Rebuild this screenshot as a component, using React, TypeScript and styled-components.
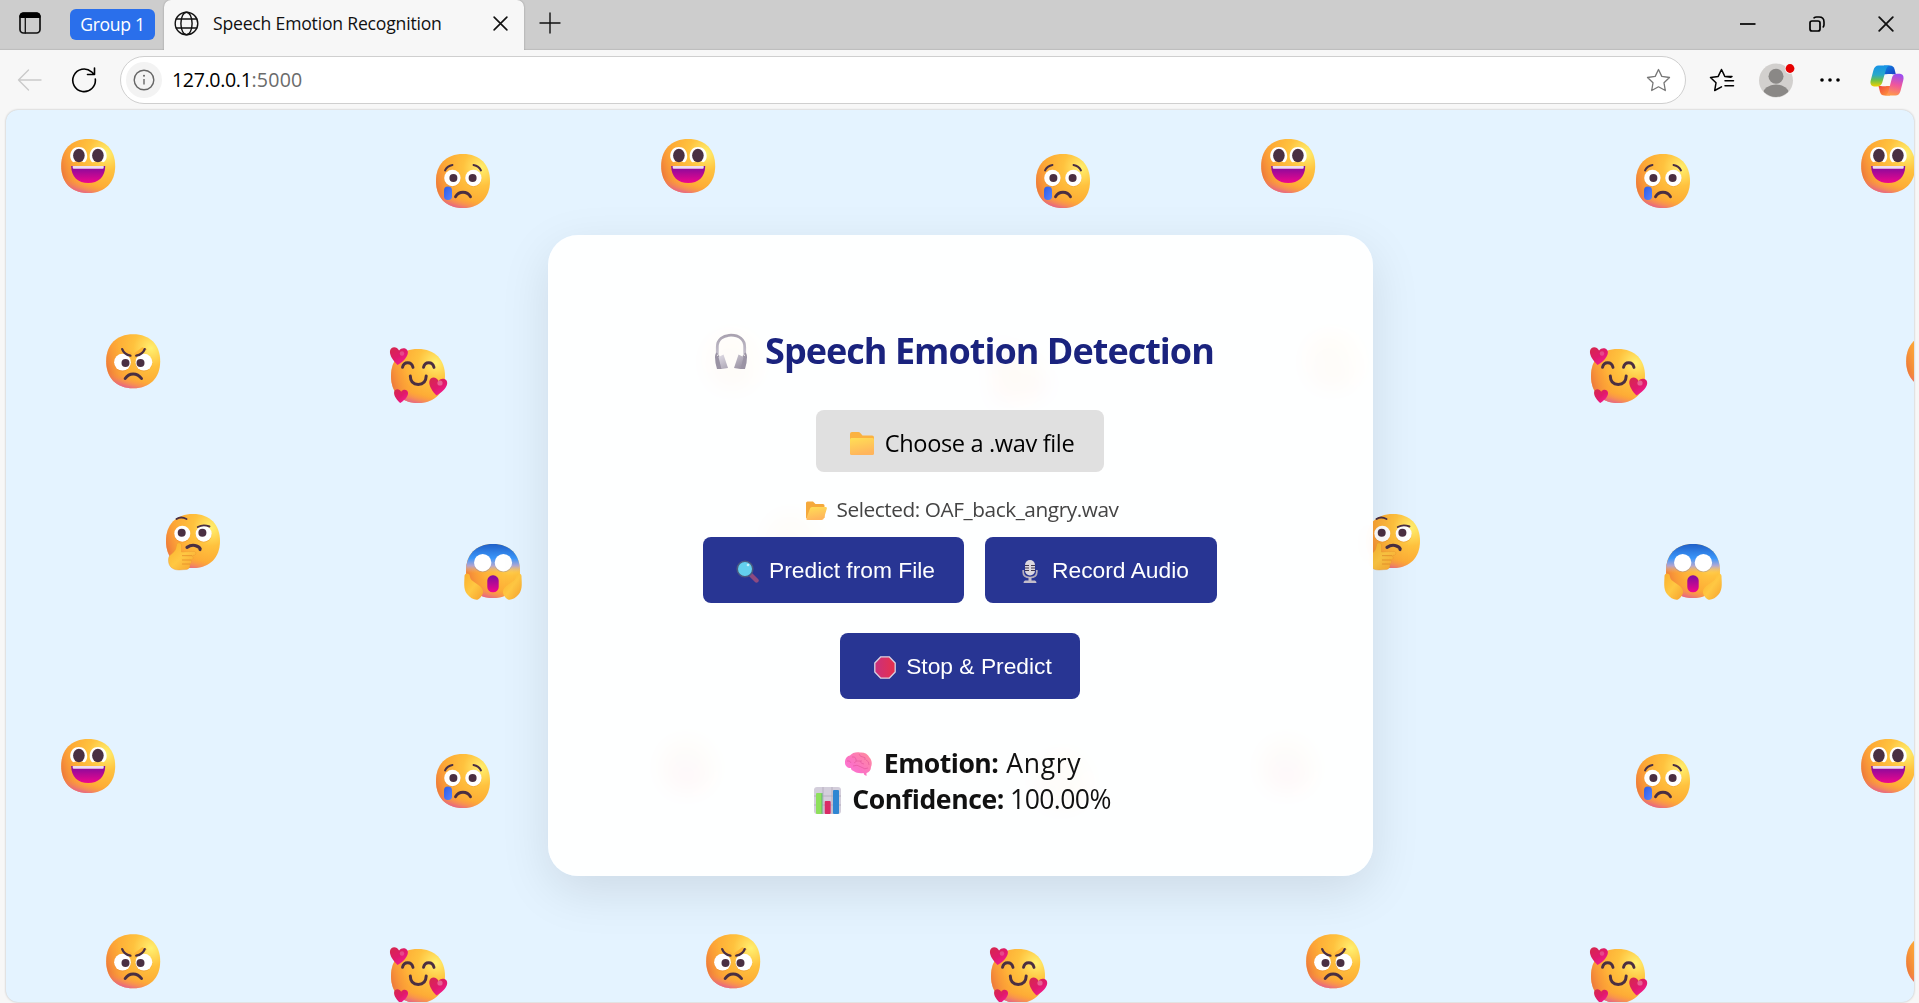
import React from "react";
import styled, { createGlobalStyle, css } from "styled-components";

const Global = createGlobalStyle`
  * { box-sizing: border-box; }
  html, body { margin: 0; height: 100%; overflow: hidden; }
  body { font-family: "Open Sans", "Noto Sans", sans-serif; background: #f7f7f7; color: #111; }
  button { font-family: inherit; }
  svg { flex: none; }
`;

/* ---------- browser chrome ---------- */

const Browser = styled.div`
  display: grid;
  grid-template-rows: 50px 60px minmax(0, 1fr);
  height: 1003px;
  width: 100%;
  background: #f7f7f7;
`;

const TabStrip = styled.div`
  display: flex;
  align-items: stretch;
  background: #cdcdcd;
  box-shadow: inset 0 -2px 1px -1px #bdbdbd;
`;

const StripCell = styled.div<{ $w: number; $pad?: number }>`
  display: flex;
  align-items: center;
  flex: 0 0 ${(p) => p.$w}px;
  padding-left: ${(p) => p.$pad ?? 0}px;
  padding-bottom: 4px;
`;

const GroupPill = styled.div`
  display: flex;
  align-items: center;
  justify-content: center;
  width: 85px;
  height: 31px;
  margin-top: 3px;
  border-radius: 6px;
  background: #2a6feb;
  color: #fff;
`;

const Tab = styled.div`
  display: flex;
  align-items: center;
  flex: 0 0 360px;
  padding: 0 16px 4px 10px;
  background: #f7f7f7;
  border-radius: 7px 7px 0 0;
  box-shadow: 0 0 2px rgba(0, 0, 0, 0.3);
  clip-path: inset(0 -3px 0 -3px);
`;

const TabTitle = styled.div`
  flex: 1;
  padding-left: 14px;
`;

const WindowButtons = styled.div`
  display: flex;
  align-items: center;
  margin-left: auto;
  padding: 0 25px 2px 0;
  gap: 53px;
`;

const Toolbar = styled.div`
  display: flex;
  align-items: center;
  padding: 0 15px 0 17px;
`;

const NavIcons = styled.div`
  display: flex;
  align-items: center;
  gap: 29px;
  width: 103px;
`;

const AddressBar = styled.div`
  display: flex;
  align-items: center;
  flex: 0 0 1566px;
  height: 48px;
  padding: 0 14px 0 5px;
  border: 1px solid #cfcfcf;
  border-radius: 24px;
  background: #fff;
`;

const InfoBadge = styled.div`
  display: flex;
  align-items: center;
  justify-content: center;
  width: 36px;
  height: 36px;
  border-radius: 50%;
  background: #f3f3f3;
`;

const Url = styled.div`
  flex: 1;
  padding-left: 10px;
`;

const ToolIcons = styled.div`
  display: grid;
  grid-template-columns: 50px 61px 50px 34px;
  align-items: center;
  padding-left: 23px;
`;

/* ---------- page ---------- */

const PageFrame = styled.div`
  display: grid;
  min-height: 0;
  filter: drop-shadow(0 0 1px rgba(0, 0, 0, 0.25));
`;

const Page = styled.main`
  position: relative;
  display: flex;
  justify-content: center;
  align-items: flex-start;
  margin: 0 5px 1px 6px;
  padding-top: 125px;
  border-radius: 12px;
  overflow: hidden;
  background: #e4f3ff;
`;

const Wallpaper = styled.svg`
  position: absolute;
  top: 0;
  left: -1px;
  width: calc(100% + 1px);
  height: 100%;
`;

const Card = styled.section`
  position: relative;
  display: flex;
  flex-direction: column;
  align-items: center;
  width: 825px;
  height: 641px;
  margin-left: 1px;
  border-radius: 30px;
  padding: 86px 1px 0 0;
  background: rgba(255, 255, 255, 0.96);
  backdrop-filter: blur(10px);
  box-shadow: 0 15px 50px rgba(0, 0, 0, 0.1);
`;

const Title = styled.h1`
  display: flex;
  align-items: center;
  height: 60px;
  margin: 0;
  color: #1a237e;
`;

const FileButton = styled.button`
  display: flex;
  align-items: center;
  justify-content: center;
  width: 288px;
  height: 62px;
  margin-top: 29px;
  padding: 4px 0 0;
  border: 0;
  border-radius: 8px;
  background: #e0e0e0;
  color: #000;
`;

const Selected = styled.div`
  display: flex;
  align-items: center;
  height: 30px;
  margin-top: 23px;
  color: #444;
`;

const ButtonRow = styled.div<{ $top: number }>`
  display: flex;
  gap: 21px;
  margin-top: ${(p) => p.$top}px;
`;

const ActionButton = styled.button<{ $w: number }>`
  display: flex;
  align-items: center;
  justify-content: center;
  width: ${(p) => p.$w}px;
  height: 66px;
  padding: 2px 0 0;
  border: 0;
  border-radius: 8px;
  background: #283593;
  color: #fff;
`;

const Results = styled.div`
  display: flex;
  flex-direction: column;
  align-items: center;
  margin-top: 47px;
  color: #111;
`;

const ResultLine = styled.div`
  display: flex;
  align-items: center;
  height: 36px;
`;

const Glyph = styled.span<{ $lead: number }>`
  display: flex;
  padding-left: ${(p) => p.$lead}px;
`;

interface LabelProps {
  $size: number;
  $ls?: number;
  $weight?: number;
  $arial?: boolean;
  $gap?: number;
  $lift?: number;
  $color?: string;
}

const Label = styled.span<LabelProps>`
  display: inline-block;
  white-space: pre;
  font-size: ${(p) => p.$size}px;
  letter-spacing: ${(p) => p.$ls ?? 0}px;
  font-weight: ${(p) => p.$weight ?? 400};
  line-height: 1.3;
  margin-left: ${(p) => p.$gap ?? 0}px;
  padding-bottom: ${(p) => (p.$lift ?? 0) * 2}px;
  ${(p) => p.$color && css`color: ${p.$color};`}
  ${(p) => p.$arial && css`font-family: "Liberation Sans", Arial, sans-serif;`}
`;

/* ---------- emoji wallpaper ---------- */

const FACE = "M0-27C17-27 27-16.500 27 0S17 27 0 27-27 16.500-27 0-17-27 0-27Z";
const HEART = "M0 9C-4 6-9 1-9-4C-9-9-2.500-10 0-5.500C2.500-10 9-9 9-4C9 1 4 6 0 9Z";
const INK = "#4a2f42";

const Face = () => (
  <>
    <path d={FACE} fill="url(#skin)" />
    <path d={FACE} fill="url(#skinLeft)" />
    <path d={FACE} fill="url(#skinBottom)" />
  </>
);

const Eye = ({ x, y, px, py, r = 8.2 }: { x: number; y: number; px: number; py: number; r?: number }) => (
  <>
    <circle cx={x} cy={y + 0.8} r={r} fill="#e07a20" opacity=".35" />
    <circle cx={x} cy={y} r={r} fill="#fff" />
    <circle cx={px} cy={py} r="4" fill={INK} />
  </>
);

const Stroke = ({ d, w = 2.4 }: { d: string; w?: number }) => (
  <path d={d} fill="none" stroke={INK} strokeWidth={w} strokeLinecap="round" />
);

const Grin = () => (
  <g>
    <Face />
    <path d="M-18-9.500C-18-16-14-19-9.400-19S-1-16-1-9.500C-1-6-3-3.700-4.500-3.700C-7-5.500-12-5.500-14.500-3.700C-16.500-4.500-18-7-18-9.500Z" fill="#fff" />
    <path d="M18.500-9.500C18.500-16 14.500-19 9.800-19S1.500-16 1.500-9.500C1.500-6 3.500-3.700 5-3.700C7.500-5.500 12.500-5.500 15-3.700C17-4.500 18.500-7 18.500-9.500Z" fill="#fff" />
    <ellipse cx="-9.300" cy="-10.500" rx="5.800" ry="6.800" fill={INK} />
    <ellipse cx="9.700" cy="-10.500" rx="5.800" ry="6.800" fill={INK} />
    <path d="M-17 0H17C17 11 10 17 0 17S-17 11-17 0Z" fill="url(#mouth)" />
    <path d="M-15.500 0H15.500V1.800Q15.500 2.800 14.500 2.800H-14.500Q-15.500 2.800-15.500 1.800Z" fill="#eedcf2" />
  </g>
);

const Cry = () => (
  <g>
    <Face />
    <Eye x={-10.6} y={-3} px={-9.6} py={-3} />
    <Eye x={10.4} y={-3} px={9.6} py={-3} />
    <Stroke w={1.9} d="M-18-10.500Q-16-15-10.500-16M18-10.500Q16-15 10.500-16" />
    <Stroke w={2.9} d="M-7.500 15.700Q-5 11.200 0 11.200T7.500 15.700" />
    <rect x="-19" y="5.600" width="8" height="13.400" rx="3.800" fill="url(#tear)" />
  </g>
);

const Angry = () => (
  <g>
    <Face />
    <Eye x={-10.7} y={1} px={-7.7} py={1.7} r={8.4} />
    <Eye x={10.7} y={1} px={7.3} py={1.7} r={8.4} />
    <path d="M-14-12L-1-3V-8L-9-14ZM14-12L1-3V-8L9-14Z" fill="#ffb636" />
    <Stroke w={2.3} d="M-11-12Q-9-6.500-2.800-5.500M11.500-12Q9.500-6.500 3-5.500" />
    <Stroke w={3} d="M-8 17.300Q-5 12.700 0 12.700T8.300 17.300" />
  </g>
);

const Adoring = () => (
  <g>
    <Face />
    <Stroke w={2.9} d="M-15.500-8.600Q-14.500-13.200-10.300-13.200T-5-8.600M5.500-8.600Q6.500-13.200 10.700-13.200T16-8.600" />
    <Stroke w={3} d="M-7.700 0Q-7.500 8.500 .200 8.500T8.200 0" />
    <path transform="translate(-19.500 -20) rotate(6)" d={HEART} fill="url(#heart)" />
    <path transform="translate(-17.200 20) rotate(5) scale(.78)" d={HEART} fill="url(#heart)" />
    <path transform="translate(19.700 10.500) rotate(8)" d={HEART} fill="url(#heart)" />
    <circle cx="22" cy="7" r="2.600" fill="#fff" opacity=".3" />
    <circle cx="-16" cy="-22.500" r="2.200" fill="#fff" opacity=".2" />
  </g>
);

const Thinking = () => (
  <g>
    <Face />
    <Eye x={-10.7} y={-7.3} px={-11.3} py={-8.3} r={8} />
    <Eye x={10.7} y={-7.3} px={9.4} py={-8.3} r={8} />
    <Stroke w={1.9} d="M-16.500-22Q-12-25-6.500-22M4.800-14Q10-17 16.500-14.500" />
    <Stroke w={3.2} d="M-6 6.300Q-1 3 3.500 5T7 8.500" />
    <path d="M-16.500 4C-16.500 1-11.500 1-11.500 5V11L1 10.500C3.500 10.500 3.500 14.300 1 14.300L-1 15C1 16 0 18.500-2 19C-1 20.500-2 22.500-3 23C-2.500 26-4 28.500-7 28.500L-14 29C-21 29-25 25-24.500 18C-24 12-17 13-16.500 4Z" fill="url(#hand)" stroke="#e8922a" strokeOpacity=".45" strokeWidth=".8" />
    <path d="M-11 14.700H-1M-11 19H-2M-11 23H-3" stroke="#e8922a" strokeWidth=".9" fill="none" />
  </g>
);

const Scream = () => (
  <g>
    <Face />
    <path d={FACE} fill="url(#fear)" />
    <circle cx="-10.300" cy="-7.500" r="8.800" fill="#5a70c0" opacity=".3" />
    <circle cx="10.400" cy="-7.500" r="8.800" fill="#5a70c0" opacity=".3" />
    <circle cx="-10.300" cy="-8.300" r="8.700" fill="#fff" />
    <circle cx="10.400" cy="-8.300" r="8.700" fill="#fff" />
    <rect x="-5.700" y="4.300" width="11.400" height="17" rx="5.400" fill="url(#mouth)" />
    <path d="M-28.500 5C-28.500 1.500-23 1.500-23 6C-22 11-15 12-11.500 17C-8 21-11 26-15 28.500C-18 29.500-23 27-26 23C-30 18-28.500 10-28.500 5Z" fill="url(#hand)" />
    <path d="M28.500 5C28.500 1.500 23 1.500 23 6C22 11 15 12 11.500 17C8 21 11 26 15 28.500C18 29.500 23 27 26 23C30 18 28.500 10 28.500 5Z" fill="url(#hand)" />
  </g>
);

const EmojiWallpaper = () => (
  <Wallpaper>
    <defs>
      <radialGradient id="skin" gradientUnits="userSpaceOnUse" cx="18" cy="-13" r="36">
        <stop offset="0" stopColor="#fff070" />
        <stop offset=".5" stopColor="#ffc23e" />
        <stop offset="1" stopColor="#fdaa35" />
      </radialGradient>
      <linearGradient id="skinLeft" gradientUnits="userSpaceOnUse" x1="-28" y1="7" x2="-9" y2="1">
        <stop offset="0" stopColor="#e5633d" stopOpacity=".8" />
        <stop offset="1" stopColor="#ff9a3a" stopOpacity="0" />
      </linearGradient>
      <linearGradient id="skinBottom" gradientUnits="userSpaceOnUse" x1="-3" y1="28" x2="0" y2="17">
        <stop offset="0" stopColor="#e0569c" stopOpacity=".9" />
        <stop offset="1" stopColor="#ff8f4a" stopOpacity="0" />
      </linearGradient>
      <linearGradient id="mouth" x1="0" y1="0" x2="0" y2="1">
        <stop offset=".1" stopColor="#8a0a9c" />
        <stop offset="1" stopColor="#f0068c" />
      </linearGradient>
      <linearGradient id="tear" x1="0" y1="0" x2="1" y2="1">
        <stop offset="0" stopColor="#2f5be6" />
        <stop offset="1" stopColor="#5584ff" />
      </linearGradient>
      <linearGradient id="heart" x1="0" y1="0" x2="1" y2="1">
        <stop offset="0" stopColor="#d32a4a" />
        <stop offset=".5" stopColor="#e0196a" />
        <stop offset="1" stopColor="#fb1aa0" />
      </linearGradient>
      <linearGradient id="hand" x1="0" y1="0" x2="1" y2="1">
        <stop offset="0" stopColor="#fbb02c" />
        <stop offset=".5" stopColor="#ffc843" />
        <stop offset="1" stopColor="#f6a12e" />
      </linearGradient>
      <linearGradient id="fear" gradientUnits="userSpaceOnUse" x1="0" y1="-27" x2="0" y2="2">
        <stop offset="0" stopColor="#2060c8" />
        <stop offset=".5" stopColor="#3a97fb" />
        <stop offset=".75" stopColor="#a9a4e0" stopOpacity=".9" />
        <stop offset="1" stopColor="#f5b070" stopOpacity="0" />
      </linearGradient>
      <pattern id="emoji" width="600" height="600" patternUnits="userSpaceOnUse">
        <g transform="translate(83.200 56)"><Grin /></g>
        <g transform="translate(458 71)"><Cry /></g>
        <g transform="translate(128.200 251.200)"><Angry /></g>
        <g transform="translate(413 266)"><Adoring /></g>
        <g transform="translate(188 431)"><Thinking /></g>
        <g transform="translate(488 461)"><Scream /></g>
      </pattern>
    </defs>
    <rect width="100%" height="100%" fill="url(#emoji)" />
  </Wallpaper>
);

/* ---------- card icons ---------- */

const Headphones = () => (
  <svg width="34" height="37" viewBox="0 0 34 37">
    <defs>
      <linearGradient id="hp" x1="0" y1="0" x2="0" y2="1">
        <stop offset="0" stopColor="#a9a2b0" />
        <stop offset="1" stopColor="#c6c1ce" />
      </linearGradient>
      <linearGradient id="cup" x1="0" y1="0" x2="1" y2="1">
        <stop offset="0" stopColor="#e0dce6" />
        <stop offset="1" stopColor="#948d9e" />
      </linearGradient>
    </defs>
    <path d="M3.300 22V14C3.300 6.500 9 2.200 17 2.200S30.700 6.500 30.700 14V22" fill="none" stroke="url(#hp)" strokeWidth="2.800" />
    <path d="M3 20Q1.500 23 2 25M31 20Q32.500 23 32 25" fill="none" stroke="#9c95a5" strokeWidth="1.800" />
    <path d="M1 24L5 22L8 36H3Q1 30 1 24ZM33 24L29 22L26 36H31Q33 30 33 24Z" fill="#9a93a4" />
    <path d="M4.500 24L9.500 21.500L14 35L7.500 36ZM29.500 24L24.500 21.500L20 35L26.500 36Z" fill="url(#cup)" />
  </svg>
);

const Folder = () => (
  <svg width="24" height="23" viewBox="0 0 25 23" preserveAspectRatio="none">
    <defs>
      <linearGradient id="fold" x1="0" y1="0" x2=".3" y2="1">
        <stop offset="0" stopColor="#ffdf55" />
        <stop offset="1" stopColor="#ffb55c" />
      </linearGradient>
    </defs>
    <path d="M0 2Q0 0 2 0H8.500Q10 0 11 1.200L13 3.500H23Q25 3.500 25 5.500V10H0Z" fill="#fbb240" />
    <path d="M0 7.500Q0 6 1.500 6H23.500Q25 6 25 7.500V21.500Q25 23 23.500 23H1.500Q0 23 0 21.500Z" fill="url(#fold)" />
  </svg>
);

const OpenFolder = () => (
  <svg width="21" height="19" viewBox="0 0 21 19">
    <path d="M0 2Q0 .5 1.500 .5H7L9.500 3H17Q18.500 3 18.500 4.500V17H0Z" fill="#f5a93c" />
    <path d="M4 7.500Q4.500 6 6 6H19.500Q21.300 6 20.800 7.800L18 17Q17.500 19 15.500 19H1.500Q0 19 .4 17.500Z" fill="url(#fold)" />
  </svg>
);

const Magnifier = () => (
  <svg width="23" height="23" viewBox="0 0 23 23">
    <path d="M14 14L20.500 20.500" stroke="#8d4a80" strokeWidth="4.400" strokeLinecap="round" />
    <circle cx="9" cy="9" r="7.800" fill="#63d0ee" stroke="#4a5a80" strokeWidth="1.600" />
    <circle cx="12" cy="5" r="1.300" fill="#c5f1fd" />
  </svg>
);

const Microphone = () => (
  <svg width="16" height="23" viewBox="0 0 16 23">
    <path d="M1.200 10V12Q1.200 17.500 8 17.500T14.800 12V10" fill="none" stroke="#b3acba" strokeWidth="1.700" />
    <path d="M6.500 17H9.500V20.500H13Q14.500 21 14.500 23H1.500Q1.500 21 3 20.500H6.500Z" fill="#c3bdc9" />
    <rect x="3" width="10" height="15.500" rx="5" fill="#dcd8e0" />
    <path d="M3 5.500H7M9 5.500H13M3 8H7M9 8H13M3 10.500H7M9 10.500H13" stroke="#43384c" strokeWidth="1.100" />
  </svg>
);

const StopSign = () => (
  <svg width="22" height="23" viewBox="0 0 22 23">
    <defs>
      <linearGradient id="stop" x1="0" y1="0" x2="1" y2="0">
        <stop offset="0" stopColor="#c8307e" />
        <stop offset="1" stopColor="#e8304a" />
      </linearGradient>
    </defs>
    <path d="M6.800 .8H15.200L21.200 7V16L15.200 22.200H6.800L.8 16V7Z" fill="url(#stop)" stroke="#d8d2e2" strokeWidth="1.300" strokeLinejoin="round" />
  </svg>
);

const Brain = () => (
  <svg width="27" height="24" viewBox="0 0 27 24">
    <defs>
      <linearGradient id="brain" x1="1" y1="0" x2="0" y2="1">
        <stop offset="0" stopColor="#ff8f9a" />
        <stop offset=".6" stopColor="#fb72c4" />
        <stop offset="1" stopColor="#ff7ae0" />
      </linearGradient>
    </defs>
    <path d="M0 11C-.5 7 2 4 5 3.500C7 .5 12-.5 15 .5C19 0 23 2 24.500 5.500C27 8 27.300 12 26 15C26 18 24 20.500 21.500 21V24Q18.500 23 18.500 21C15 21.500 11 21 8.500 19C6 18 6 17 6 16C3 16.500 0 14 0 11Z" fill="url(#brain)" />
    <path d="M2 9Q5 8 6 11M7 5Q10 4 11 7T9 11M14 2Q15 5 18 5T20 8M11 9H17M21 8Q24 9 24 13M8 14Q12 12 16 15T23 16M15 9Q16 12 19 12" fill="none" stroke="#e05098" strokeWidth="1" opacity=".55" />
  </svg>
);

const BarChart = () => (
  <svg width="27" height="27" viewBox="0 0 27 27">
    <rect width="27" height="27" rx="3" fill="#d3cedb" />
    <path d="M0 9H27M0 18H27M9 0V27M18 0V27" stroke="#b3adbd" strokeWidth=".9" />
    <rect x="2" y="6" width="6" height="21" rx="1" fill="#8ee05c" />
    <path d="M8 6V27" stroke="#56b070" strokeWidth=".9" />
    <rect x="10.700" y="14" width="6" height="13" rx="1" fill="#d92c66" />
    <rect x="19" y="3" width="6" height="24" rx="1" fill="#2f86d2" />
  </svg>
);

/* ---------- chrome icons ---------- */

const line = { fill: "none", stroke: "#111", strokeWidth: 1.5, strokeLinecap: "round", strokeLinejoin: "round" } as const;

const Workspaces = () => (
  <svg width="22" height="22" viewBox="0 0 22 22">
    <rect x="1" y="1" width="20" height="20" rx="3.500" {...line} strokeWidth={1.7} />
    <path d="M1 5.500V4Q1 1 4 1H18Q21 1 21 4V5.500Z" fill="#000" stroke="#000" />
    <path d="M6.300 6V21" {...line} strokeWidth={1.3} />
  </svg>
);

const Globe = () => (
  <svg width="25" height="25" viewBox="0 0 25 25">
    <g {...line} strokeWidth={1.4}>
      <circle cx="12.500" cy="12.500" r="11.300" />
      <ellipse cx="12.500" cy="12.500" rx="5.600" ry="11.300" />
      <path d="M2.200 8H22.800M2.200 17H22.800" />
    </g>
  </svg>
);

const CloseIcon = ({ s, w = 1.5 }: { s: number; w?: number }) => (
  <svg width={s} height={s} viewBox="0 0 16 16">
    <path d="M1.200 1.200L14.800 14.800M14.800 1.200L1.200 14.800" {...line} strokeWidth={w} />
  </svg>
);

const Plus = () => (
  <svg width="22" height="22" viewBox="0 0 22 22"><path d="M11 1V21M1 11H21" {...line} strokeWidth={1.4} /></svg>
);

const Minimize = () => (
  <svg width="16" height="16" viewBox="0 0 16 16"><path d="M0 8H15.500" stroke="#000" strokeWidth="1.700" /></svg>
);

const Restore = () => (
  <svg width="16" height="16" viewBox="0 0 16 16">
    <rect x="1" y="5" width="10" height="10" rx="2" {...line} stroke="#000" strokeWidth={1.7} />
    <path d="M5 1.800Q6 1 7.500 1H10Q15 1 15 6V8.500Q15 10 14.200 11" {...line} stroke="#000" strokeWidth={1.6} />
  </svg>
);

const Back = () => (
  <svg width="25" height="22" viewBox="0 0 25 22"><path d="M11.500 1L1.500 11L11.500 21M1.500 11H24" {...line} stroke="#cacaca" strokeWidth={1.4} /></svg>
);

const Reload = () => (
  <svg width="26" height="26" viewBox="0 0 26 26">
    <path d="M24.300 12A11.300 11.300 0 1 1 20.500 4.800L23 7.300M23.500 1V7.500H16.500" {...line} strokeWidth={1.6} stroke="#000" />
  </svg>
);

const Info = () => (
  <svg width="22" height="22" viewBox="0 0 22 22">
    <circle cx="11" cy="11" r="9.800" {...line} stroke="#666" strokeWidth={1.4} />
    <circle cx="11" cy="6.800" r="1" fill="#666" />
    <path d="M11 10V15.500" stroke="#666" strokeWidth="1.400" />
  </svg>
);

const STAR = "M12.500 1.500L15.800 8.400L23.500 9.500L18 14.800L19.300 22.500L12.500 18.800L5.700 22.500L7 14.800L1.500 9.500L9.200 8.400Z";

const Star = () => (
  <svg width="25" height="25" viewBox="0 0 25 25"><path d={STAR} {...line} stroke="#777" strokeWidth={1.3} /></svg>
);

const Favorites = () => (
  <svg width="26" height="25" viewBox="0 0 26 25">
    <path d="M22 9.200L15.800 8.400L12.500 1.500L9.200 8.400L1.500 9.500L7 14.800L5.700 22.500L12.500 18.800M16 12.700H24.500M16 17.700H24.500M17.500 8.600L23 8.500" {...line} strokeWidth={1.5} stroke="#000" />
  </svg>
);

const Avatar = () => (
  <svg width="36" height="36" viewBox="0 0 36 36">
    <defs><clipPath id="av"><circle cx="17" cy="18.500" r="16.500" /></clipPath></defs>
    <circle cx="17" cy="18.500" r="17" fill="#d2d0ce" />
    <circle cx="17" cy="14.300" r="7.500" fill="#8a8886" />
    <ellipse cx="17" cy="32" rx="13" ry="9.500" fill="#8a8886" clipPath="url(#av)" />
    <circle cx="31" cy="6.500" r="5.200" fill="#f7f7f7" />
    <circle cx="31" cy="6.500" r="4.400" fill="#e60000" />
  </svg>
);

const Dots = () => (
  <svg width="20" height="6" viewBox="0 0 20 6">
    <circle cx="2" cy="3" r="1.800" /><circle cx="10" cy="3" r="1.800" /><circle cx="18" cy="3" r="1.800" />
  </svg>
);

const Copilot = () => (
  <svg width="34" height="31" viewBox="0 0 34 31">
    <defs>
      <linearGradient id="c1" x1="0" y1="0" x2="0" y2="1">
        <stop offset="0" stopColor="#1593e8" /><stop offset=".45" stopColor="#2aa9c8" /><stop offset=".7" stopColor="#6cc04a" /><stop offset="1" stopColor="#f2cf00" />
      </linearGradient>
      <linearGradient id="c2" x1=".6" y1="0" x2=".4" y2="1">
        <stop offset="0" stopColor="#9a4df2" /><stop offset=".5" stopColor="#f0569c" /><stop offset="1" stopColor="#ff9a4a" />
      </linearGradient>
      <linearGradient id="c3" x1="0" y1="0" x2="1" y2="1">
        <stop offset="0" stopColor="#0d86e4" /><stop offset="1" stopColor="#1a3fc2" />
      </linearGradient>
      <linearGradient id="c4" x1="0" y1="0" x2="1" y2="1">
        <stop offset="0" stopColor="#f0443c" /><stop offset="1" stopColor="#ff9b3d" />
      </linearGradient>
    </defs>
    <path d="M14 .5H20Q23.500 .5 24.500 4L25.800 9.200H14Z" fill="url(#c3)" />
    <path d="M20 30.500H14.500Q11 30.500 10 27L8.500 21H20Z" fill="url(#c4)" />
    <path d="M8.500 .5H20Q17 1 16 4.500L12.200 17.800Q11 21.500 7 21.500H4Q-.5 21 .7 15.500L3.500 5Q4.800 .5 8.500 .5Z" fill="url(#c1)" />
    <path d="M25.500 30.500H14.500Q17.300 30 18.400 26.500L22 12.800Q23 8.700 27 8.700H30Q34.500 9.500 33.300 15L30.500 26Q29.200 30.500 25.500 30.500Z" fill="url(#c2)" />
    <path d="M18.500 8.900H22.500Q21.700 9.800 21.300 11.300L19.600 18Q18.600 21.300 15.500 21.300H11.500Q12.500 20.500 13 18.800L15.300 11.300Q16.200 8.900 18.500 8.900Z" fill="#f7f7f7" />
  </svg>
);

export default function App() {
  return (
    <>
      <Global />
      <Browser>
        <TabStrip>
          <StripCell $w={70} $pad={19}><Workspaces /></StripCell>
          <StripCell $w={94}><GroupPill><Label $size={17.6} $ls={-0.3}>Group 1</Label></GroupPill></StripCell>
          <Tab>
            <Globe />
            <TabTitle><Label $size={17.6} $ls={-0.2}>Speech Emotion Recognition</Label></TabTitle>
            <CloseIcon s={15} w={1.7} />
          </Tab>
          <StripCell $w={60} $pad={15}><Plus /></StripCell>
          <WindowButtons><Minimize /><Restore /><CloseIcon s={16} w={1.8} /></WindowButtons>
        </TabStrip>
        <Toolbar>
          <NavIcons><Back /><Reload /></NavIcons>
          <AddressBar>
            <InfoBadge><Info /></InfoBadge>
            <Url>
              <Label $size={19.6} $ls={-0.35} $color="#000">127.0.0.1</Label>
              <Label $size={19.6} $ls={0.2} $color="#6b6b6b">:5000</Label>
            </Url>
            <Star />
          </AddressBar>
          <ToolIcons><Favorites /><Avatar /><Dots /><Copilot /></ToolIcons>
        </Toolbar>
        <PageFrame>
          <Page>
            <EmojiWallpaper />
            <Card>
              <Title>
                <Glyph $lead={8}><Headphones /></Glyph>
                <Label $size={36} $weight={700} $ls={-0.98} $gap={17}>Speech Emotion Detection</Label>
              </Title>
              <FileButton>
                <Glyph $lead={4}><Folder /></Glyph>
                <Label $size={23.6} $ls={-0.37} $gap={11}>Choose a .wav file</Label>
              </FileButton>
              <Selected>
                <Glyph $lead={5}><OpenFolder /></Glyph>
                <Label $size={20.8} $ls={-0.43} $gap={9}>Selected: OAF_back_angry.wav</Label>
              </Selected>
              <ButtonRow $top={12}>
                <ActionButton $w={261}>
                  <Glyph $lead={4}><Magnifier /></Glyph>
                  <Label $arial $size={22.8} $gap={10}>Predict from File</Label>
                </ActionButton>
                <ActionButton $w={232}>
                  <Glyph $lead={9}><Microphone /></Glyph>
                  <Label $arial $size={22.8} $gap={14}>Record Audio</Label>
                </ActionButton>
              </ButtonRow>
              <ButtonRow $top={30}>
                <ActionButton $w={240}>
                  <Glyph $lead={6}><StopSign /></Glyph>
                  <Label $arial $size={22.8} $gap={10}>Stop &amp; Predict</Label>
                </ActionButton>
              </ButtonRow>
              <Results>
                <ResultLine>
                  <Glyph $lead={6}><Brain /></Glyph>
                  <Label $size={26.6} $weight={700} $ls={-0.52} $gap={12} $lift={1}>Emotion:</Label>
                  <Label $size={26.6} $ls={0.6} $gap={8} $lift={1}>Angry</Label>
                </ResultLine>
                <ResultLine>
                  <Glyph $lead={5}><BarChart /></Glyph>
                  <Label $size={26.6} $weight={700} $ls={-0.4} $gap={11} $lift={1}>Confidence:</Label>
                  <Label $size={26.6} $ls={-0.6} $gap={6} $lift={1}>100.00%</Label>
                </ResultLine>
              </Results>
            </Card>
          </Page>
        </PageFrame>
      </Browser>
    </>
  );
}
